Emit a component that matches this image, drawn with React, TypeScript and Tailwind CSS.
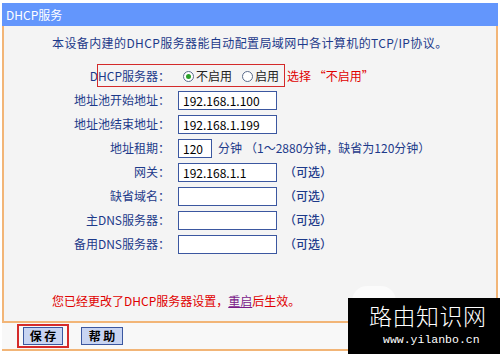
import React from "react";

const FONT = { fontFamily: '"Noto Sans CJK SC", "Noto Sans", sans-serif' };

function Field({ value = "", w = "w-[99px]" }: { value?: string; w?: string }) {
  return (
    <div
      className={`${w} h-[19px] border border-[#3b57a0] bg-white text-[12px] leading-[17px] pl-[4px] text-black whitespace-nowrap overflow-hidden`}
    >
      {value}
    </div>
  );
}

function Row({ label, children }: { label: string; children?: React.ReactNode }) {
  return (
    <div className="flex items-center h-[24px]">
      <div className="w-[166px] text-right text-[12px] text-[#1d3a8a] whitespace-nowrap">{label}</div>
      <div className="ml-[8px] flex items-center">{children}</div>
    </div>
  );
}

function Radio({ checked }: { checked?: boolean }) {
  return (
    <span className="w-[11px] h-[11px] rounded-full border border-[#5a6b8a] bg-white flex items-center justify-center">
      {checked && <span className="w-[5px] h-[5px] rounded-full bg-[#2aa02a]" />}
    </span>
  );
}

const Optional = () => (
  <span className="ml-[7px] text-[12px] text-[#1d3a8a] font-medium">（可选）</span>
);

export default function App() {
  return (
    <div className="w-[500px] h-[354px] bg-white relative overflow-hidden" style={FONT}>
      <div className="mt-[3px] mx-[2px] h-[23px] bg-[#6396fc] text-white text-[12px] pl-[4px] flex items-center">
        DHCP服务
      </div>
      <div className="mx-[2px] h-[295px] border-x-2 border-[#f2b577] bg-[#f4f4f4] pt-[9px]">
        <div className="pl-[48px] text-[12px] leading-[16px] text-[#1d3a8a] tracking-[0.4px]">
          本设备内建的DHCP服务器能自动配置局域网中各计算机的TCP/IP协议。
        </div>
        <div className="mt-[13px] relative">
          <div className="absolute left-[93px] top-0 w-[188px] h-[23px] border-[1.5px] border-[#d42a2a]" />
          <Row label="DHCP服务器：">
            <span className="ml-[5px]"><Radio checked /></span>
            <span className="ml-[2px] text-[12px] text-[#222]">不启用</span>
            <span className="ml-[10px]"><Radio /></span>
            <span className="ml-[2px] text-[12px] text-[#222]">启用</span>
            <span className="ml-[8px] text-[12px] text-[#e00000]">选择 “不启用”</span>
          </Row>
          <Row label="地址池开始地址：">
            <Field value="192.168.1.100" />
          </Row>
          <Row label="地址池结束地址：">
            <Field value="192.168.1.199" />
          </Row>
          <Row label="地址租期：">
            <Field value="120" w="w-[34px]" />
            <span className="ml-[6px] text-[12px] text-[#1d3a8a]">分钟</span>
            <span className="ml-[3px] text-[12px] text-[#1d3a8a]">（1～2880分钟，缺省为120分钟）</span>
          </Row>
          <Row label="网关：">
            <Field value="192.168.1.1" />
            <Optional />
          </Row>
          <Row label="缺省域名：">
            <Field />
            <Optional />
          </Row>
          <Row label="主DNS服务器：">
            <Field />
            <Optional />
          </Row>
          <Row label="备用DNS服务器：">
            <Field />
            <Optional />
          </Row>
        </div>
        <div className="mt-[37px] pl-[48px] text-[12px] leading-[16px] text-[#e00000]">
          您已经更改了DHCP服务器设置，
          <span className="text-[#7a1a8a] underline">重启</span>
          后生效。
        </div>
      </div>
      <div className="mx-[2px] h-[30px] border-y-2 border-[#f2b577] bg-[#f8f8f8] flex items-center">
        <div className="ml-[15px] border-2 border-[#d42a2a] px-[4px] py-[1px]">
          <div className="w-[40px] h-[18px] border border-[#3b57a0] bg-[#c8d4f2] text-[12px] font-bold text-black flex items-center justify-center">
            保 存
          </div>
        </div>
        <div className="ml-[12px] w-[42px] h-[18px] border border-[#3b57a0] bg-[#c8d4f2] text-[12px] font-bold text-black flex items-center justify-center">
          帮 助
        </div>
      </div>
      <div className="absolute left-[352px] top-[286px] w-[44px] h-[30px] rounded-full bg-white opacity-60" />
      <div className="absolute left-[348px] top-[298px] w-[152px] h-[56px] bg-black flex flex-col items-start">
        <div className="ml-[21px] mt-[5px] text-[23px] leading-[24px] text-white font-light tracking-[0.5px]">
          路由知识网
        </div>
        <div
          className="ml-[35px] mt-[6px] text-[11.5px] leading-[14px] text-white"
          style={{ fontFamily: '"Liberation Mono", monospace' }}
        >
          www.yilanbo.cn
        </div>
      </div>
    </div>
  );
}
